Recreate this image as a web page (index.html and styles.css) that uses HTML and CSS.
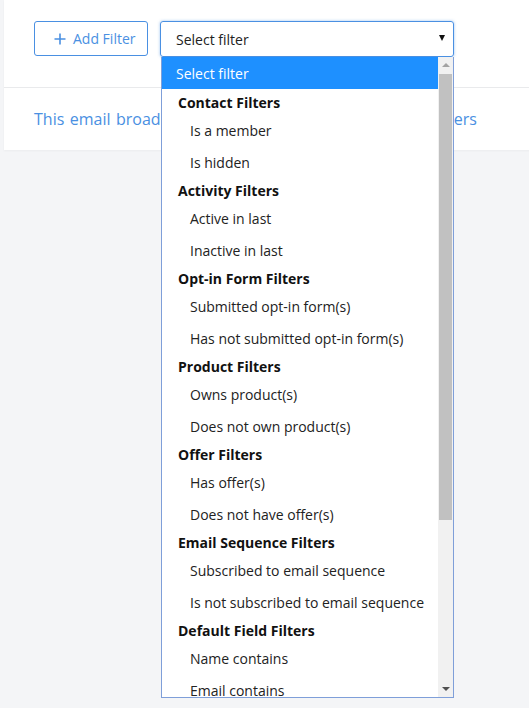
FILE: index.html
```html
<!DOCTYPE html>
<html>
<head>
<meta charset="utf-8">
<link rel="stylesheet" href="styles.css">
</head>
<body>
<div class="card">
  <div class="toolbar">
    <button class="add-btn"><svg class="plus" width="12" height="12" viewBox="0 0 12 12"><path d="M6 0.5V11.5M0.5 6H11.5" stroke="#4a90e2" stroke-width="1.6" fill="none"/></svg><span>Add Filter</span></button>
    <div class="select-wrap">
      <div class="select">
        <span>Select filter</span>
        <span class="caret"></span>
      </div>
      <div class="dropdown">
        <div class="list">
          <div class="opt selected">Select filter</div>
          <div class="grp">Contact Filters</div>
          <div class="opt sub">Is a member</div>
          <div class="opt sub">Is hidden</div>
          <div class="grp">Activity Filters</div>
          <div class="opt sub">Active in last</div>
          <div class="opt sub">Inactive in last</div>
          <div class="grp">Opt-in Form Filters</div>
          <div class="opt sub">Submitted opt-in form(s)</div>
          <div class="opt sub">Has not submitted opt-in form(s)</div>
          <div class="grp">Product Filters</div>
          <div class="opt sub">Owns product(s)</div>
          <div class="opt sub">Does not own product(s)</div>
          <div class="grp">Offer Filters</div>
          <div class="opt sub">Has offer(s)</div>
          <div class="opt sub">Does not have offer(s)</div>
          <div class="grp">Email Sequence Filters</div>
          <div class="opt sub">Subscribed to email sequence</div>
          <div class="opt sub">Is not subscribed to email sequence</div>
          <div class="grp">Default Field Filters</div>
          <div class="opt sub">Name contains</div>
          <div class="opt sub">Email contains</div>
        </div>
        <div class="scrollbar">
          <div class="arrow up"></div>
          <div class="thumb"></div>
          <div class="arrow down"></div>
        </div>
      </div>
    </div>
  </div>
  <div class="message">This email broadcast will be sent to all of your subscribers</div>
</div>
</body>
</html>
```
FILE: styles.css
```css
html, body {
  margin: 0;
  padding: 0;
}
body {
  background: #f4f5f7;
  font-family: "Open Sans", "Liberation Sans", sans-serif;
  font-size: 14px;
  color: #222;
  width: 529px;
  height: 708px;
  overflow: hidden;
}
.card {
  margin-left: 4px;
  width: 560px;
  background: #fff;
  height: 150px;
  box-shadow: 0 1px 2px rgba(0,0,0,0.04);
}
.toolbar {
  display: flex;
  gap: 12px;
  padding: 21px 0 0 30px;
  height: 66px;
  border-bottom: 1px solid #e9eaec;
}
.add-btn {
  box-sizing: border-box;
  width: 114px;
  height: 35px;
  border: 1px solid #4a90e2;
  border-radius: 3px;
  background: #fff;
  color: #4a90e2;
  font-family: inherit;
  font-size: 14px;
  display: flex;
  align-items: center;
  justify-content: flex-start;
  gap: 7px;
  padding: 0 0 0 19px;
}
.plus {
  display: block;
  flex: none;
}
.select-wrap {
  position: relative;
}
.select {
  box-sizing: border-box;
  width: 294px;
  height: 36px;
  border: 1px solid #4a90e2;
  border-radius: 3px;
  box-shadow: 0 0 3px rgba(74,144,226,0.55);
  display: flex;
  align-items: center;
  justify-content: space-between;
  padding: 0 8px 0 15px;
  color: #222;
}
.caret {
  width: 0;
  height: 0;
  border-left: 3.5px solid transparent;
  border-right: 3.5px solid transparent;
  border-top: 6px solid #111;
  margin-top: -2px;
}
.dropdown {
  position: absolute;
  top: 36px;
  left: 1px;
  width: 293px;
  height: 641px;
  box-sizing: border-box;
  border: 1px solid #7f9fd9;
  border-top: 0;
  background: #fff;
  display: flex;
  overflow: hidden;
  z-index: 10;
}
.list {
  flex: 1;
  overflow: hidden;
}
.opt {
  height: 32px;
  line-height: 36px;
  padding-left: 14px;
  color: #222;
  white-space: nowrap;
}
.opt.selected {
  background: #1e90ff;
  color: #fff;
  line-height: 34px;
}
.opt.sub {
  padding-left: 28px;
}
.grp {
  height: 24px;
  line-height: 27px;
  padding-left: 16px;
  font-weight: 700;
  color: #111;
  white-space: nowrap;
}
.scrollbar {
  width: 15px;
  background: #f1f1f1;
  display: flex;
  flex-direction: column;
  align-items: center;
}
.arrow {
  width: 0;
  height: 0;
  border-left: 4px solid transparent;
  border-right: 4px solid transparent;
}
.arrow.up {
  border-bottom: 4px solid #a3a3a3;
  margin: 6px 0 7px;
}
.thumb {
  width: 13px;
  height: 446px;
  background: #c1c1c1;
}
.arrow.down {
  border-top: 4px solid #505050;
  margin-top: auto;
  margin-bottom: 6px;
}
.message {
  padding: 20px 0 0 30px;
  font-size: 16px;
  color: #4a90e2;
  white-space: nowrap;
  word-spacing: 1.3px;
}
```
